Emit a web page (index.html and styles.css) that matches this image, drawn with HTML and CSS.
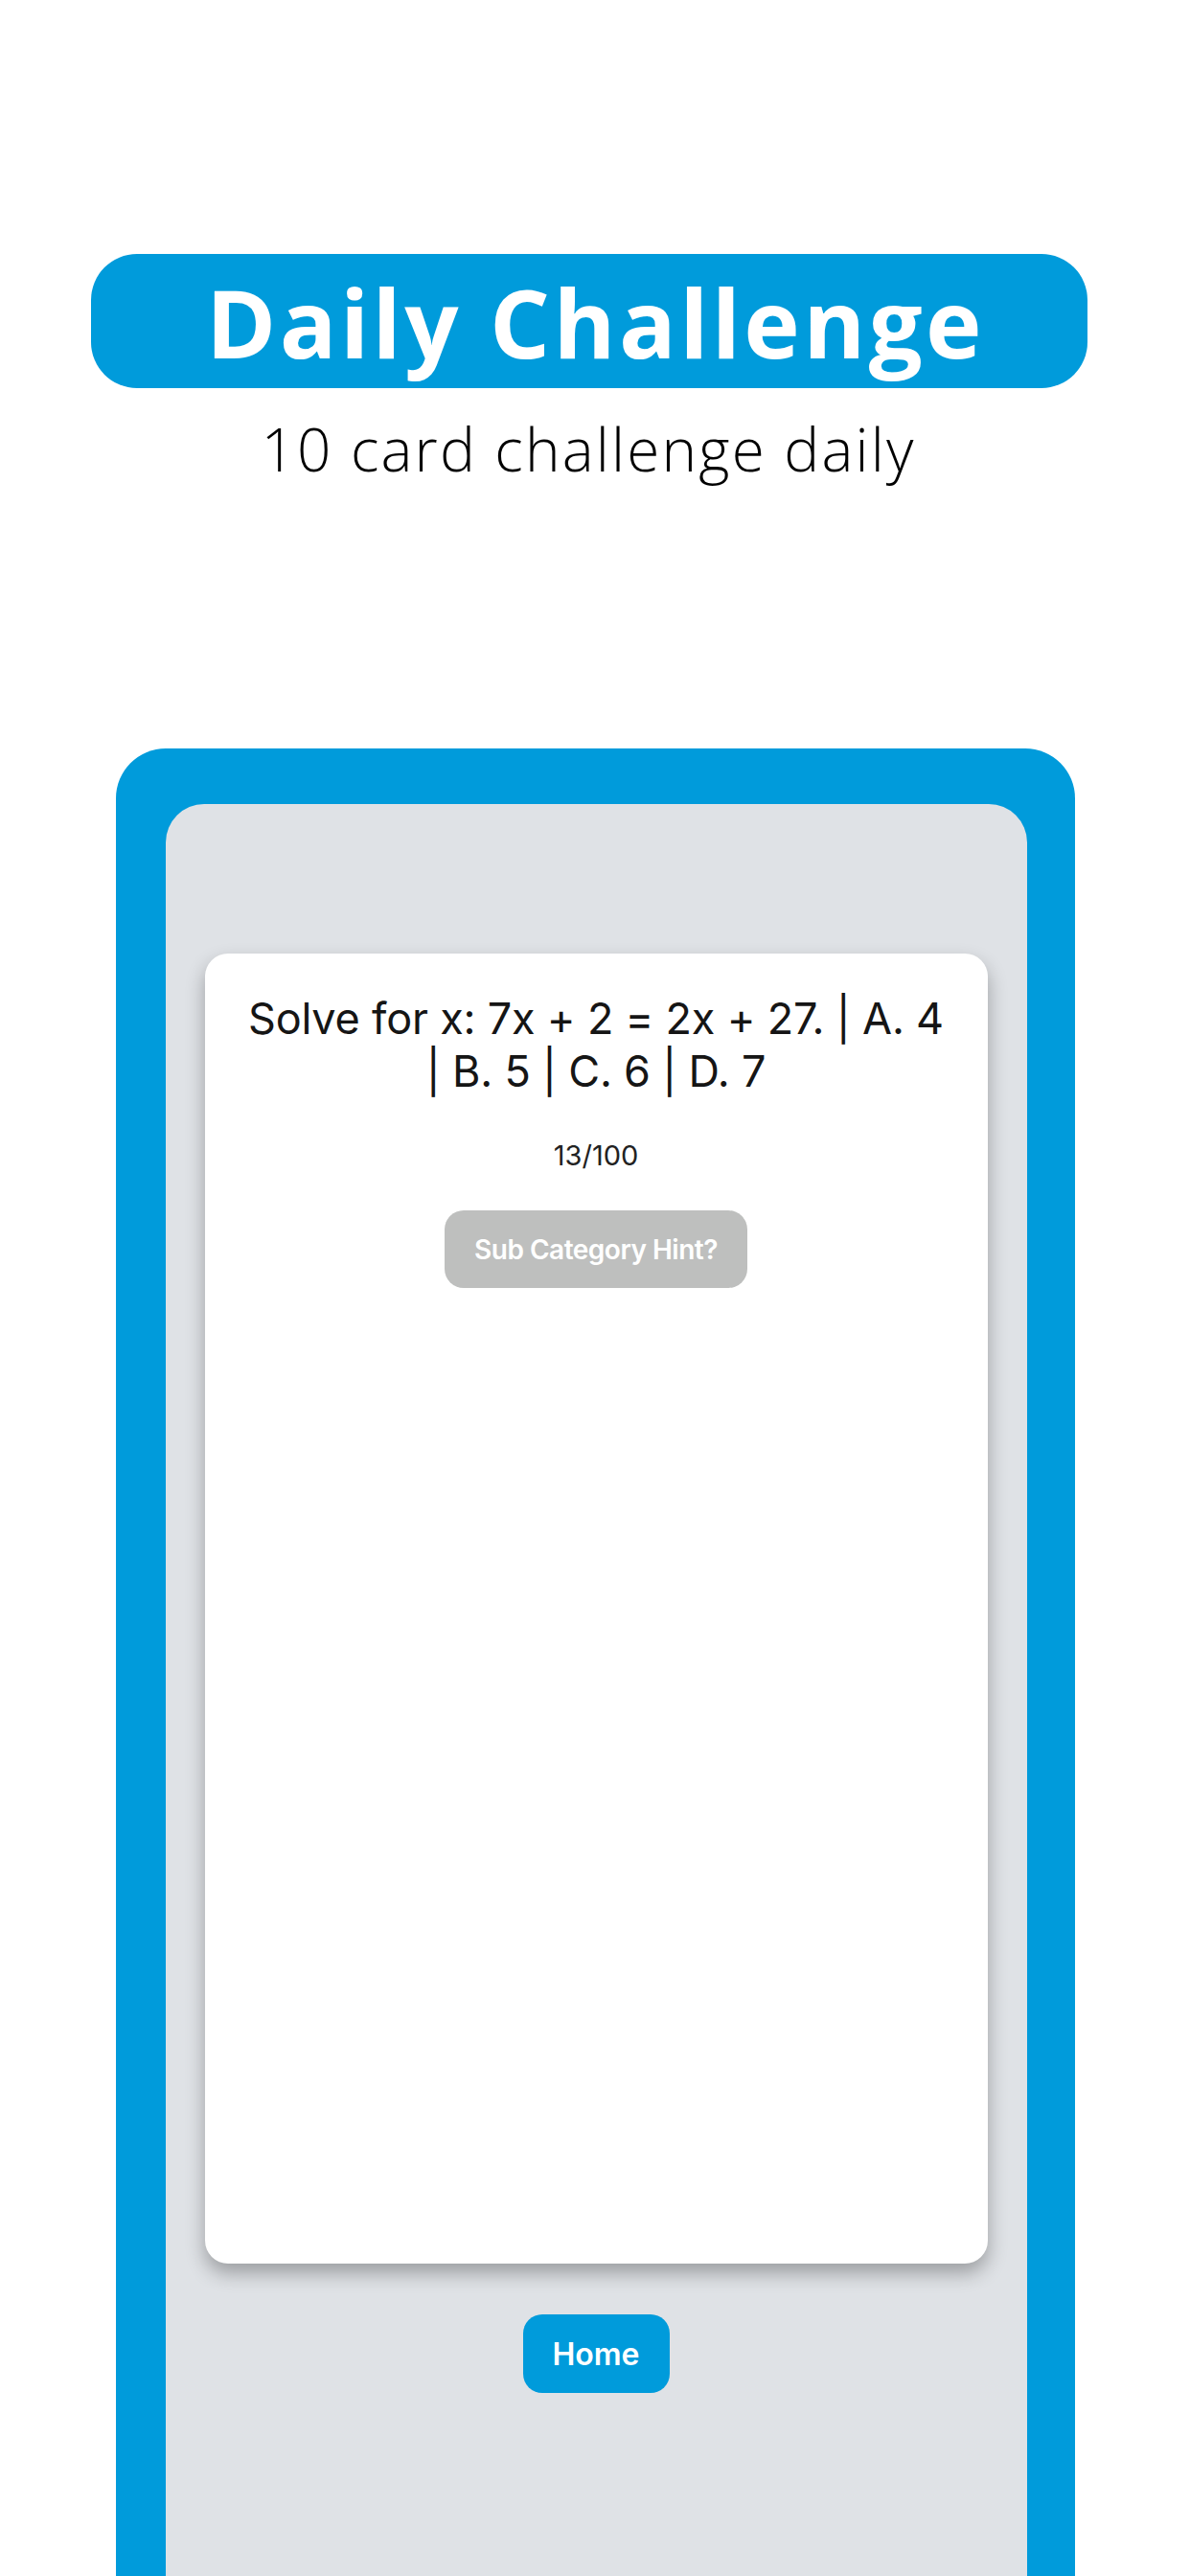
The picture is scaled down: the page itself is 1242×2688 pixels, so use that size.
FILE: index.html
```html
<!DOCTYPE html>
<html lang="en">
<head>
<meta charset="utf-8">
<title>Daily Challenge</title>
<link rel="stylesheet" href="styles.css">
</head>
<body>
<div class="page">
  <header class="hero">
    <div class="pill"><h1 class="title">Daily Challenge</h1></div>
    <p class="sub">10 card challenge daily</p>
  </header>
  <main class="frame">
    <div class="panel">
      <section class="card">
        <p class="question">Solve for x: 7x + 2 = 2x + 27. | A. 4 | B. 5 | C. 6 | D. 7</p>
        <p class="count">13/100</p>
        <button class="hint" type="button">Sub Category Hint?</button>
      </section>
      <button class="home" type="button">Home</button>
    </div>
  </main>
</div>
</body>
</html>
```
FILE: styles.css
```css
html, body {
  margin: 0;
  padding: 0;
  background: #ffffff;
}

body {
  font-family: Inter, "Liberation Sans", sans-serif;
}

.page {
  display: flex;
  flex-direction: column;
  height: 2688px;
  overflow: hidden;
}

.hero {
  padding-top: 265px;
}

.pill {
  box-sizing: border-box;
  width: 1040px;
  height: 140px;
  margin-left: 95px;
  padding-left: 13px;
  background: #009bdb;
  border-radius: 48px;
  display: flex;
  align-items: center;
  justify-content: center;
}

.title {
  margin: 0;
  font-family: "Open Sans", "Liberation Sans", sans-serif;
  font-weight: 700;
  font-size: 99px;
  line-height: 1;
  letter-spacing: 3.4px;
  color: #ffffff;
}

.sub {
  margin: 26px 0 0;
  padding-right: 14px;
  text-align: center;
  font-family: "Open Sans", "Liberation Sans", sans-serif;
  font-weight: 300;
  font-size: 62px;
  line-height: 74px;
  letter-spacing: 2.2px;
  color: #000000;
}

.frame {
  box-sizing: border-box;
  flex: 1;
  width: 1001px;
  margin: 276px auto 0;
  padding: 58px 50px 0 52px;
  background: #009bdb;
  border-radius: 52px 52px 0 0;
  display: flex;
  flex-direction: column;
}

.panel {
  flex: 1;
  background: #dfe2e6;
  border-radius: 40px 40px 0 0;
  padding: 156px 41px 0;
  display: flex;
  flex-direction: column;
  align-items: center;
}

.card {
  box-sizing: border-box;
  width: 100%;
  height: 1367px;
  flex-shrink: 0;
  padding: 40px 38px 0;
  background: #ffffff;
  border-radius: 24px;
  box-shadow: 0 10px 20px rgba(0, 0, 0, 0.3);
  display: flex;
  flex-direction: column;
  align-items: center;
  text-align: center;
}

.question {
  margin: 0;
  font-size: 45px;
  line-height: 55px;
  letter-spacing: -0.2px;
  color: #151515;
}

.count {
  margin: 43px 0 0;
  font-size: 29px;
  line-height: 35px;
  color: #222222;
}

.hint {
  margin-top: 40px;
  width: 316px;
  height: 81px;
  border: none;
  border-radius: 20px;
  background: #bebfbe;
  color: #ffffff;
  font-family: Inter, "Liberation Sans", sans-serif;
  font-weight: 600;
  font-size: 28px;
  letter-spacing: -0.5px;
  padding: 0;
}

.home {
  margin-top: 53px;
  width: 153px;
  height: 82px;
  border: none;
  border-radius: 20px;
  background: #009bdb;
  color: #ffffff;
  font-family: Inter, "Liberation Sans", sans-serif;
  font-weight: 600;
  font-size: 32px;
  padding: 0;
}
```
